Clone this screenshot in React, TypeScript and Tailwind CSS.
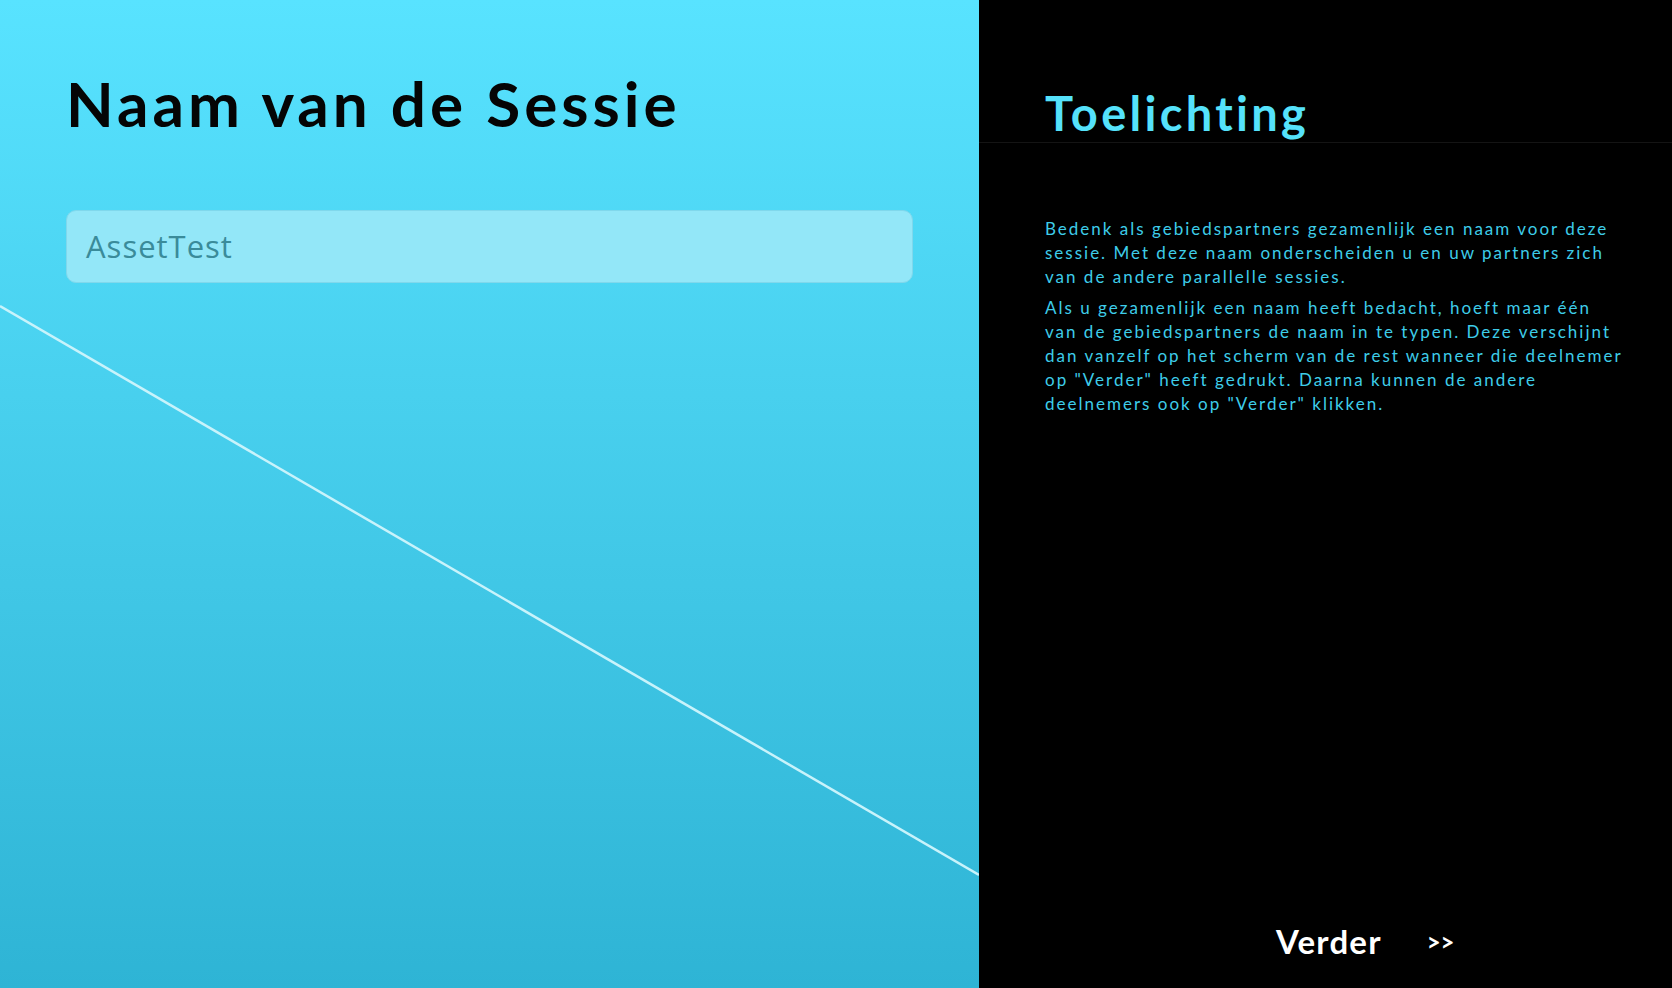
import React from "react";

export default function App() {
  return (
    <div className="flex h-[988px] w-full overflow-hidden" style={{ fontFamily: "Lato, 'Noto Sans', sans-serif" }}>
      <div className="relative w-[979px] shrink-0 bg-gradient-to-b from-[#58e3ff] to-[#2eb4d5]">
        <svg className="absolute inset-0 pointer-events-none" width="979" height="988" viewBox="0 0 979 988">
          <line x1="0" y1="306" x2="979" y2="875" stroke="#c8f3fb" strokeWidth="2.5" />
        </svg>
        <div className="relative px-[66px] pt-[72px]">
          <h1 className="text-[62px] font-bold leading-none tracking-[4px] text-[#050505]">Naam van de Sessie</h1>
          <div className="mt-[76px] flex h-[73px] w-[847px] items-center rounded-[10px] border border-[#80d8ec] bg-[#93e7f8] px-[19px]">
            <span className="text-[31px] tracking-[1px] text-[#3a8b9a]" style={{ fontFamily: "'Open Sans', sans-serif" }}>AssetTest</span>
          </div>
        </div>
      </div>
      <div className="flex flex-1 flex-col bg-black">
        <div className="h-[143px] border-b border-[#141414] pl-[66px] pt-[90px]">
          <h2 className="text-[47px] font-bold leading-none tracking-[3.3px] text-[#55e2fb]">Toelichting</h2>
        </div>
        <div className="pl-[66px] pt-[74px] text-[17px] leading-[23.8px] tracking-[2px] text-[#3ecde9]">
          <p>
            <span className="block">Bedenk als gebiedspartners gezamenlijk een naam voor deze</span>
            <span className="block">sessie. Met deze naam onderscheiden u en uw partners zich</span>
            <span className="block">van de andere parallelle sessies.</span>
          </p>
          <p className="mt-[8px]">
            <span className="block">Als u gezamenlijk een naam heeft bedacht, hoeft maar één</span>
            <span className="block">van de gebiedspartners de naam in te typen. Deze verschijnt</span>
            <span className="block">dan vanzelf op het scherm van de rest wanneer die deelnemer</span>
            <span className="block">op "Verder" heeft gedrukt. Daarna kunnen de andere</span>
            <span className="block">deelnemers ook op "Verder" klikken.</span>
          </p>
        </div>
        <div className="mt-auto flex items-center pb-[30px] pl-[297px]">
          <button className="flex items-center text-white">
            <span className="text-[33px] font-bold leading-none tracking-[1.2px]">Verder</span>
            <span className="ml-[45px] text-[24px] font-bold leading-none">&gt;&gt;</span>
          </button>
        </div>
      </div>
    </div>
  );
}
